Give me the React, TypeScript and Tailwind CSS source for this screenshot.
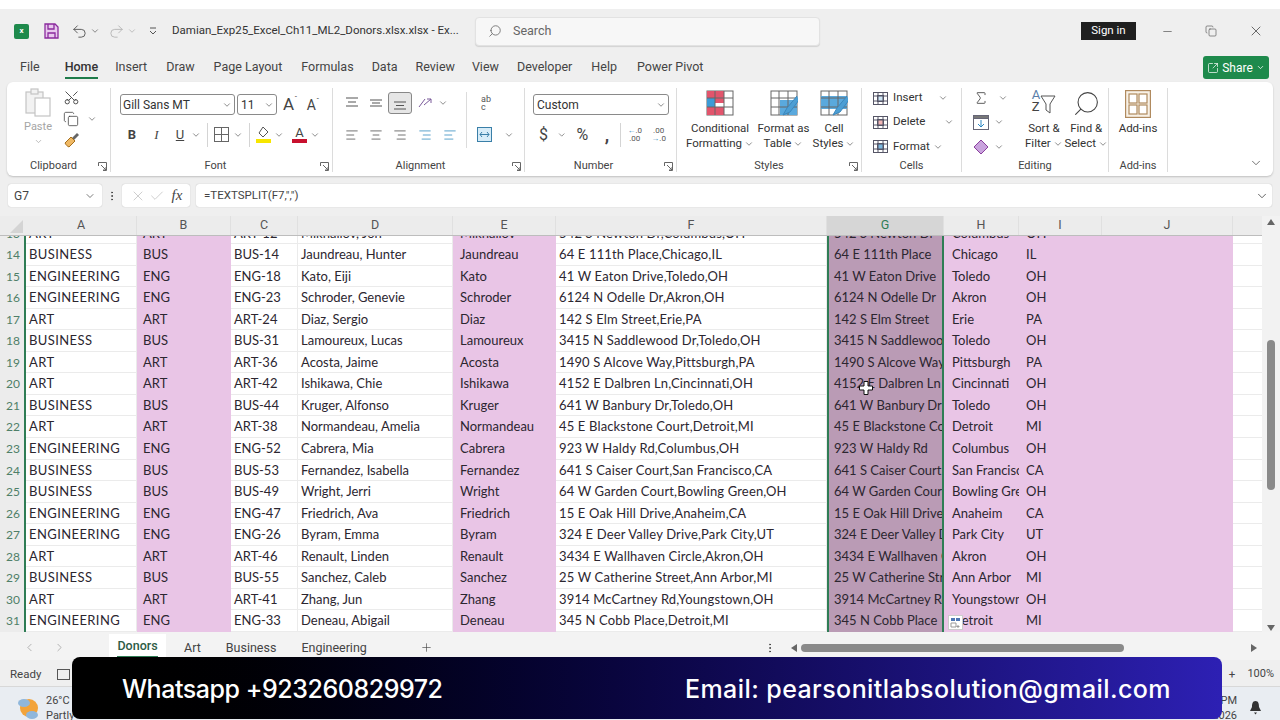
import React from "react";
import { Search, Undo2, Redo2, ChevronDown, ChevronLeft, ChevronRight, Scissors, AlignLeft, AlignCenter, AlignRight, Sigma, X, Check, Minus, Plus, SquareArrowOutUpRight, Copy, EllipsisVertical } from "lucide-react";

const ui = "font-['Roboto',sans-serif]";
const rows: string[][] = [
  ["13","ART","ART","ART-12","Mikhailov, Jon","Mikhailov","542 S Newton Dr,Columbus,OH","542 S Newton Dr","Columbus","OH"],
  ["14","BUSINESS","BUS","BUS-14","Jaundreau, Hunter","Jaundreau","64 E 111th Place,Chicago,IL","64 E 111th Place","Chicago","IL"],
  ["15","ENGINEERING","ENG","ENG-18","Kato, Eiji","Kato","41 W Eaton Drive,Toledo,OH","41 W Eaton Drive","Toledo","OH"],
  ["16","ENGINEERING","ENG","ENG-23","Schroder, Genevie","Schroder","6124 N Odelle Dr,Akron,OH","6124 N Odelle Dr","Akron","OH"],
  ["17","ART","ART","ART-24","Diaz, Sergio","Diaz","142 S Elm Street,Erie,PA","142 S Elm Street","Erie","PA"],
  ["18","BUSINESS","BUS","BUS-31","Lamoureux, Lucas","Lamoureux","3415 N Saddlewood Dr,Toledo,OH","3415 N Saddlewood Dr","Toledo","OH"],
  ["19","ART","ART","ART-36","Acosta, Jaime","Acosta","1490 S Alcove Way,Pittsburgh,PA","1490 S Alcove Way","Pittsburgh","PA"],
  ["20","ART","ART","ART-42","Ishikawa, Chie","Ishikawa","4152 E Dalbren Ln,Cincinnati,OH","4152 E Dalbren Ln","Cincinnati","OH"],
  ["21","BUSINESS","BUS","BUS-44","Kruger, Alfonso","Kruger","641 W Banbury Dr,Toledo,OH","641 W Banbury Dr","Toledo","OH"],
  ["22","ART","ART","ART-38","Normandeau, Amelia","Normandeau","45 E Blackstone Court,Detroit,MI","45 E Blackstone Court","Detroit","MI"],
  ["23","ENGINEERING","ENG","ENG-52","Cabrera, Mia","Cabrera","923 W Haldy Rd,Columbus,OH","923 W Haldy Rd","Columbus","OH"],
  ["24","BUSINESS","BUS","BUS-53","Fernandez,  Isabella","Fernandez","641 S Caiser Court,San Francisco,CA","641 S Caiser Court","San Francisco","CA"],
  ["25","BUSINESS","BUS","BUS-49","Wright,  Jerri","Wright","64 W Garden Court,Bowling Green,OH","64 W Garden Court","Bowling Green","OH"],
  ["26","ENGINEERING","ENG","ENG-47","Friedrich, Ava","Friedrich","15 E Oak Hill Drive,Anaheim,CA","15 E Oak Hill Drive","Anaheim","CA"],
  ["27","ENGINEERING","ENG","ENG-26","Byram,  Emma","Byram","324 E Deer Valley Drive,Park City,UT","324 E Deer Valley Drive","Park City","UT"],
  ["28","ART","ART","ART-46","Renault, Linden","Renault","3434 E Wallhaven Circle,Akron,OH","3434 E Wallhaven Circle","Akron","OH"],
  ["29","BUSINESS","BUS","BUS-55","Sanchez,  Caleb","Sanchez","25 W Catherine Street,Ann Arbor,MI","25 W Catherine Street","Ann Arbor","MI"],
  ["30","ART","ART","ART-41","Zhang, Jun","Zhang","3914 McCartney Rd,Youngstown,OH","3914 McCartney Rd","Youngstown","OH"],
  ["31","ENGINEERING","ENG","ENG-33","Deneau, Abigail","Deneau","345 N Cobb Place,Detroit,MI","345 N Cobb Place","Detroit","MI"],
];

const whiteCell = "border-b border-r border-[#ebebeb] bg-white pl-[3px]";
const pinkCell = "bg-[#e9c5e6]";

function Chev({ className = "" }: { className?: string }) {
  return <ChevronDown size={10} strokeWidth={1.6} className={"text-[#555] " + className} />;
}

function Launcher() {
  return (
    <svg width="9" height="9" viewBox="0 0 9 9" fill="none" stroke="#666" strokeWidth="1">
      <path d="M.5 4V.5H8.5V8.5H5M3 3L8 8M8 5V8H5" />
    </svg>
  );
}

function Group({ w, label, lp = "", launcher, children }: { w: string; label: string; lp?: string; launcher?: boolean; children: React.ReactNode }) {
  return (
    <div className={"flex flex-col h-[84px] border-r border-[#dcdcdc] my-[6px] " + w}>
      <div className="h-[72px] shrink-0">{children}</div>
      <div className={"relative h-[12px] flex items-center justify-center text-[11px] text-[#444] " + lp}>
        <span>{label}</span>
        {launcher && <span className="absolute right-[3px] top-[2px] flex"><Launcher /></span>}
      </div>
    </div>
  );
}

function BigIcon({ children, line1, line2, w }: { children: React.ReactNode; line1: string; line2: string; w: string }) {
  return (
    <div className={"flex flex-col items-center " + w}>
      <div className="h-[29px] flex items-center">{children}</div>
      <div className="text-[11.5px] leading-[15px] text-[#333] mt-[4px] text-center whitespace-nowrap">{line1}</div>
      <div className="text-[11.5px] leading-[15px] text-[#333] flex items-center gap-[2px] whitespace-nowrap">
        {line2}
        <Chev />
      </div>
    </div>
  );
}

function GridIcon({ fill }: { fill: "cond" | "table" | "cell" }) {
  return (
    <svg width="28" height="26" viewBox="0 0 28 26" fill="none">
      <rect x="1" y="1" width="26" height="24" fill="#fff" stroke="#666" />
      {fill === "cond" && (
        <>
          <rect x="1" y="1" width="17" height="7" fill="#e2556c" />
          <rect x="1" y="8" width="8" height="9" fill="#3d9bd6" />
          <rect x="9" y="8" width="9" height="5" fill="#e2556c" />
          <rect x="1" y="17" width="17" height="8" fill="#e2556c" />
        </>
      )}
      {fill === "table" && <rect x="10" y="10" width="17" height="15" fill="#5aa9dd" />}
      {fill === "cell" && <rect x="1" y="6" width="26" height="13" fill="#5aa9dd" />}
      <path d="M1 8H27M1 17H27M9 1V25M18 1V25" stroke="#666" />
      {fill !== "cond" && <path d="M27 6L17 18L13 25L20 22L29 10" fill="#4c9ed4" stroke="#3b87bc" />}
    </svg>
  );
}

function CellsIcon({ color }: { color: string }) {
  return (
    <svg width="15" height="15" viewBox="0 0 15 15" fill="none" stroke="#556">
      <rect x=".5" y="1.5" width="14" height="12" fill="#fff" />
      <rect x="4.5" y="4.5" width="6" height="6" fill={color} />
      <path d="M.5 5H14.5M.5 10H14.5M5 1.5V13.5M10 1.5V13.5" />
    </svg>
  );
}

function VAlign({ pos }: { pos: "top" | "mid" | "bot" }) {
  const d = pos === "top" ? "M1 2H13M3 6H11M1 10H13" : pos === "mid" ? "M1 4H13M3 7H11M1 10H13" : "M1 6H13M3 9.5H11M1 13H13";
  return (
    <svg width="14" height="14" viewBox="0 0 14 14" fill="none" stroke="#555" strokeWidth="1.2">
      <path d={d} />
    </svg>
  );
}

function Ribbon() {
  return (
    <div className="mx-[7px] h-[94px] bg-white rounded-[6px] shadow-[0_1px_2px_rgba(0,0,0,0.2)] flex items-start pr-[10px]">
      <Group w="w-[104px]" label="Clipboard" lp="pr-[10px]" launcher>
        <div className="flex h-full">
          <div className="w-[50px] flex flex-col items-center pl-[12px]">
            <svg width="26" height="29" viewBox="0 0 26 29" fill="none" stroke="#c4c4c4" strokeWidth="1.2">
              <rect x="1" y="4" width="17" height="21" fill="#f2f2f2" />
              <rect x="6" y="1" width="7" height="5" fill="#f2f2f2" />
              <rect x="10" y="10" width="15" height="18" fill="#fff" />
            </svg>
            <span className="text-[11px] text-[#a5a5a5] mt-[3px] leading-[14px]">Paste</span>
            <ChevronDown size={9} className="text-[#aaa] mt-[3px]" />
          </div>
          <div className="flex flex-col pl-[6px] pt-[1px] gap-[5px]">
            <Scissors size={17} strokeWidth={1.3} className="text-[#444] -rotate-90" />
            <div className="flex items-center gap-[8px]">
              <Copy size={16} strokeWidth={1.2} className="text-[#444]" />
              <Chev />
            </div>
            <svg width="17" height="17" viewBox="0 0 17 17" fill="none">
              <path d="M9 6L14 1L16 3L11 8Z" fill="#666" />
              <path d="M2 11L8 5L12 9L6 15C4 14 3 13 2 11Z" fill="#f0b964" stroke="#a56e1c" />
            </svg>
          </div>
        </div>
      </Group>
      <Group w="w-[222px]" label="Font" lp="pr-[12px]" launcher>
        <div className="pl-[9px] pt-[6px]">
          <div className="flex items-center h-[21px]">
            <div className="w-[115px] h-[21px] border border-[#8a8a8a] rounded-[3px] flex items-center justify-between pl-[2px] pr-[2px] text-[12px] text-[#333]">
              <span>Gill Sans MT</span>
              <Chev />
            </div>
            <div className="ml-[2px] w-[40px] h-[21px] border border-[#8a8a8a] rounded-[3px] flex items-center justify-between pl-[3px] pr-[2px] text-[12px] text-[#333]">
              <span>11</span>
              <Chev />
            </div>
            <span className="ml-[6px] text-[17px] text-[#444] leading-none">A<span className="text-[8px] align-top">ˆ</span></span>
            <span className="ml-[9px] text-[14px] text-[#444] leading-none">A<span className="text-[8px] align-top">ˇ</span></span>
          </div>
          <div className="flex items-center h-[21px] mt-[9px] text-[#444]">
            <span className="w-[24px] text-center font-bold text-[13px]">B</span>
            <span className="w-[25px] text-center italic text-[13px] font-['Liberation_Serif',serif]">I</span>
            <span className="w-[22px] text-center underline text-[13px]">U</span>
            <Chev />
            <div className="w-px h-[24px] bg-[#d4d4d4] mx-[6px]" />
            <svg width="15" height="15" viewBox="0 0 15 15" fill="none" stroke="#666"><rect x=".5" y=".5" width="14" height="14" /><path d="M7.5 .5V14.5M.5 7.5H14.5" /></svg>
            <Chev className="ml-[4px]" />
            <div className="w-px h-[24px] bg-[#d4d4d4] mx-[6px]" />
            <svg width="15" height="17" viewBox="0 0 15 17" fill="none"><path d="M7 1L12 6L7 11L3 7Z" stroke="#555" fill="#fff" /><rect y="13" width="15" height="4" fill="#f7e600" /></svg>
            <Chev className="ml-[3px]" />
            <div className="ml-[8px] w-[15px] flex flex-col items-center">
              <span className="text-[13px] leading-[13px]">A</span>
              <div className="w-[15px] h-[4px] bg-[#c8102e]" />
            </div>
            <Chev className="ml-[3px]" />
          </div>
        </div>
      </Group>
      <Group w="w-[192px]" label="Alignment" lp="pr-[16px]" launcher>
        <div className="flex pl-[7px] pt-[4px] h-full">
          <div className="w-[126px]">
            <div className="flex items-center h-[22px] text-[#555]">
              <div className="w-[24px] flex justify-center"><VAlign pos="top" /></div>
              <div className="w-[24px] flex justify-center"><VAlign pos="mid" /></div>
              <div className="w-[24px] h-[22px] flex items-center justify-center bg-[#e6e6e6] border border-[#888] rounded-[3px]"><VAlign pos="bot" /></div>
              <div className="w-[26px] flex justify-center">
                <svg width="15" height="15" viewBox="0 0 15 15" fill="none" stroke="#7a5a9a"><path d="M1 11L7 3M6 9L13 3M13 3V7M13 3H9" /></svg>
              </div>
              <Chev />
            </div>
            <div className="flex items-center h-[21px] mt-[10px] text-[#555]">
              <div className="w-[24px] flex justify-center"><AlignLeft size={14} strokeWidth={1.4} /></div>
              <div className="w-[24px] flex justify-center"><AlignCenter size={14} strokeWidth={1.4} /></div>
              <div className="w-[24px] flex justify-center"><AlignRight size={14} strokeWidth={1.4} /></div>
              <div className="w-[25px] flex justify-center text-[#3a8fc0]"><AlignRight size={14} strokeWidth={1.4} /></div>
              <div className="w-[25px] flex justify-center text-[#3a8fc0]"><AlignLeft size={14} strokeWidth={1.4} /></div>
            </div>
          </div>
          <div className="border-l border-[#dcdcdc] h-[56px] pl-[10px] pt-[0px]">
            <div className="h-[22px] flex items-center pl-[4px] text-[9px] leading-[8px] text-[#555]">ab<br />c</div>
            <div className="h-[21px] mt-[10px] flex items-center gap-[8px]">
              <svg width="15" height="15" viewBox="0 0 15 15" fill="none" stroke="#3a7fa8"><rect x=".5" y=".5" width="14" height="14" fill="#d7ecf8" /><path d="M3 7.5H12M5 5L3 7.5L5 10M10 5L12 7.5L10 10" /></svg>
              <Chev className="ml-[4px]" />
            </div>
          </div>
        </div>
      </Group>
      <Group w="w-[152px]" label="Number" lp="pr-[14px]" launcher>
        <div className="pl-[8px] pr-[7px] pt-[6px]">
          <div className="h-[21px] border border-[#8a8a8a] rounded-[3px] flex items-center justify-between pl-[3px] pr-[2px] text-[12px] text-[#333]">
            <span>Custom</span>
            <Chev />
          </div>
          <div className="flex items-center h-[21px] mt-[9px] text-[#444]">
            <span className="w-[22px] text-center text-[16px]">$</span>
            <Chev className="ml-[3px]" />
            <span className="w-[30px] ml-[2px] text-center text-[16px]">%</span>
            <span className="w-[22px] text-center text-[18px] font-bold leading-[14px]">,</span>
            <div className="w-px h-[24px] bg-[#d4d4d4] mx-[3px]" />
            <span className="w-[22px] text-[8px] leading-[8px] text-[#555] text-center"><span className="text-[#3a8fc0]">←</span>.0<br />.00</span>
            <span className="w-[22px] ml-[3px] text-[8px] leading-[8px] text-[#555] text-center">.00<br /><span className="text-[#3a8fc0]">→</span>.0</span>
          </div>
        </div>
      </Group>
      <Group w="w-[185px]" label="Styles" launcher>
        <div className="flex pl-[7px]">
          <BigIcon w="w-[72px]" line1="Conditional" line2="Formatting"><GridIcon fill="cond" /></BigIcon>
          <BigIcon w="w-[55px]" line1="Format as" line2="Table"><GridIcon fill="table" /></BigIcon>
          <BigIcon w="w-[46px]" line1="Cell" line2="Styles"><GridIcon fill="cell" /></BigIcon>
        </div>
      </Group>
      <Group w="w-[100px]" label="Cells">
        <div className="flex flex-col pl-[11px] -mt-[2px] text-[11.5px] text-[#333]">
          <div className="h-[24px] flex items-center gap-[5px]"><CellsIcon color="#cfe6f5" /><span className="w-[36px]">Insert</span><Chev className="ml-[4px]" /></div>
          <div className="h-[24px] flex items-center gap-[5px]"><CellsIcon color="#f2b6b6" /><span className="w-[38px]">Delete</span><Chev className="ml-[8px]" /></div>
          <div className="h-[25px] flex items-center gap-[5px]"><CellsIcon color="#7db9e0" /><span>Format</span><Chev className="ml-[-2px]" /></div>
        </div>
      </Group>
      <Group w="w-[147px]" label="Editing">
        <div className="flex pl-[11px]">
          <div className="w-[54px] flex flex-col -mt-[2px]">
            <div className="h-[24px] flex items-center gap-[9px]"><Sigma size={16} strokeWidth={1.3} className="text-[#444]" /><Chev /></div>
            <div className="h-[24px] flex items-center gap-[5px]">
              <svg width="16" height="15" viewBox="0 0 16 15" fill="none" stroke="#667"><rect x=".5" y=".5" width="15" height="14" fill="#fff" /><rect x=".5" y=".5" width="15" height="3" fill="#777" /><path d="M8 5V12M5 9L8 12L11 9" stroke="#2c87c2" /></svg>
              <Chev />
            </div>
            <div className="h-[25px] flex items-center gap-[5px]">
              <svg width="16" height="16" viewBox="0 0 16 16" fill="#c9a3dd" stroke="#8a3f9d"><path d="M1 8L8 1L15 8L8 15Z" /></svg>
              <Chev />
            </div>
          </div>
          <div className="w-[44px] flex flex-col items-center pt-[1px]">
            <div className="h-[29px] flex items-start leading-[12px] text-[13px] text-[#5a7ea8]">
              <span>A<br /><span className="text-[#444]">Z</span></span>
              <svg width="16" height="20" viewBox="0 0 16 20" fill="none" stroke="#555" className="mt-[6px]"><path d="M1 1H15L10 9V18L6 15V9Z" /></svg>
            </div>
            <div className="text-[11.5px] leading-[15px] text-[#333] mt-[3px]">Sort &amp;</div>
            <div className="text-[11.5px] leading-[15px] text-[#333] flex items-center gap-[2px]">Filter<Chev /></div>
          </div>
          <div className="w-[44px] flex flex-col items-center pt-[1px]">
            <div className="h-[29px]"><Search size={29} strokeWidth={0.9} className="text-[#444] -scale-x-100" /></div>
            <div className="text-[11.5px] leading-[15px] text-[#333] mt-[3px]">Find &amp;</div>
            <div className="text-[11.5px] leading-[15px] text-[#333] flex items-center gap-[2px]">Select<Chev /></div>
          </div>
        </div>
      </Group>
      <Group w="w-[59px]" label="Add-ins">
        <div className="flex flex-col items-center pt-[2px]">
          <svg width="26" height="28" viewBox="0 0 26 28" fill="#fff" stroke="#b08a5e" strokeWidth="1.2">
            <rect x=".6" y=".6" width="24.8" height="26.8" fill="#f8f1e6" />
            <rect x="4" y="4" width="8" height="9" /><rect x="14" y="4" width="8" height="9" />
            <rect x="4" y="15" width="8" height="9" /><rect x="14" y="15" width="8" height="9" />
          </svg>
          <span className="text-[11.5px] text-[#333] mt-[3px] leading-[15px]">Add-ins</span>
        </div>
      </Group>
      <div className="flex-1 h-full flex items-end justify-end pb-[6px]">
        <ChevronDown size={14} strokeWidth={1.4} className="text-[#555]" />
      </div>
    </div>
  );
}

const cols: [string, string][] = [
  ["A", "w-[111px]"], ["B", "w-[94px]"], ["C", "w-[67px]"], ["D", "w-[155px]"], ["E", "w-[103px]"],
  ["F", "w-[271px]"], ["G", "w-[117px]"], ["H", "w-[75px]"], ["I", "w-[83px]"], ["J", "w-[131px]"],
];

function Sheet() {
  return (
    <div className="flex h-[416px] mt-[9px]">
      <div className="w-[1262px] flex flex-col">
        <div className="flex h-[20px] bg-[#ececec] border-b border-[#bdbdbd] text-[12.5px] text-[#555] relative z-10 shrink-0">
          <div className="w-[26px] flex items-end justify-end pr-[3px] pb-[2px]">
            <div className="w-0 h-0 border-l-[13px] border-l-transparent border-b-[13px] border-b-[#d4d4d4]" />
          </div>
          {cols.map(([c, w]) => (
            <div key={c} className={w + " flex items-center justify-center border-r border-[#e0e0e0] " + (c === "G" ? "bg-[#d6d6d6] text-[#2f7d55]" : "")}>{c}</div>
          ))}
        </div>
        <div className="relative flex-1 overflow-hidden font-['Lato',sans-serif] text-[13px] text-[#2c2630]">
          <div className="-mt-[13.5px]">
            {rows.map((r) => (
              <div key={r[0]} className="flex h-[21.56px] leading-[21px] whitespace-nowrap">
                <div className="w-[26px] bg-[#ececec] border-r-2 border-[#2f7d55] text-[#4f7f68] text-right pr-[4px] text-[12px]">{r[0]}</div>
                <div className={"w-[111px] overflow-hidden tracking-[0.4px] " + whiteCell}>{r[1]}</div>
                <div className={"w-[94px] pl-[6px] " + pinkCell}>{r[2]}</div>
                <div className={"w-[67px] overflow-hidden " + whiteCell}>{r[3]}</div>
                <div className={"w-[155px] overflow-hidden " + whiteCell}>{r[4]}</div>
                <div className={"w-[103px] pl-[7px] " + pinkCell}>{r[5]}</div>
                <div className={"w-[271px] overflow-hidden tracking-[0.15px] " + whiteCell}>{r[6]}</div>
                <div className="w-[117px] pl-[5px] pr-[1px] overflow-hidden bg-[#ba9bb5] border-x-2 border-[#2f7d55]">{r[7]}</div>
                <div className={"w-[75px] pl-[8px] pr-[1px] overflow-hidden " + pinkCell}>{r[8]}</div>
                <div className={"w-[83px] pl-[7px] " + pinkCell}>{r[9]}</div>
                <div className={"w-[131px] " + pinkCell} />
                <div className="w-[29px] bg-white border-b border-[#ebebeb]" />
              </div>
            ))}
          </div>
          <svg className="absolute left-[859px] top-[145px]" width="14" height="14" viewBox="0 0 14 14" fill="#fff" stroke="#111" strokeWidth="1">
            <path d="M5 .5H9V5H13.5V9H9V13.5H5V9H.5V5H5Z" />
          </svg>
          <svg className="absolute left-[948px] top-[379px]" width="15" height="15" viewBox="0 0 15 15">
            <rect x=".5" y=".5" width="14" height="14" fill="#fff" stroke="#ccc" />
            <rect x="3" y="3" width="4" height="3" fill="#4f77b5" />
            <rect x="8" y="3" width="4" height="3" fill="#4f77b5" />
            <path d="M3 8H8V12H3ZM10 10V13M8.5 11.5H11.5" fill="none" stroke="#999" />
          </svg>
        </div>
      </div>
      <div className="w-[18px] bg-[#f2f2f2] flex flex-col items-center relative">
        <div className="w-0 h-0 mt-[3px] border-x-[4px] border-x-transparent border-b-[6px] border-b-[#666]" />
        <div className="w-[8px] h-[150px] mt-[115px] bg-[#8a8a8a] rounded-full" />
        <div className="w-0 h-0 mt-auto mb-[1px] border-x-[4px] border-x-transparent border-t-[6px] border-t-[#666]" />
      </div>
    </div>
  );
}

export default function App() {
  return (
    <div className={"relative w-[1280px] h-[720px] overflow-hidden bg-white " + ui}>
      <div className="h-[9px] bg-white" />
      <div className="h-[711px] bg-[#efefef] flex flex-col">
        {/* Title bar */}
        <div className="h-[41px] pt-[3px] flex items-center shrink-0 text-[#444]">
          <div className="ml-[14px] w-[15px] h-[15px] rounded-[2px] bg-[#1e8a4c] flex items-center justify-center text-white text-[8px] font-bold">x</div>
          <svg className="ml-[15px]" width="15" height="16" viewBox="0 0 15 16" fill="#e8c9ee" stroke="#8a2a9d" strokeWidth="1.3">
            <path d="M1 1H11L14 4V15H1Z" /><path d="M4 1V6H10V1M4 15V10H11V15" fill="none" />
          </svg>
          <Undo2 size={17} strokeWidth={1.3} className="ml-[12px] text-[#555]" />
          <Chev className="ml-[2px]" />
          <Redo2 size={17} strokeWidth={1.3} className="ml-[8px] text-[#b5b5b5]" />
          <ChevronDown size={10} className="ml-[2px] text-[#b5b5b5]" />
          <svg className="ml-[11px]" width="10" height="10" viewBox="0 0 10 10" fill="none" stroke="#555"><path d="M2 2H8M2 5L5 8L8 5" /></svg>
          <span className="ml-[14px] w-[303px] text-[11.5px] text-[#333] whitespace-nowrap">Damian_Exp25_Excel_Ch11_ML2_Donors.xlsx.xlsx  -  Ex...</span>
          <div className="w-[345px] h-[29px] bg-[#f7f7f7] border border-[#e2e2e2] rounded-[4px] shadow-[0_1px_1px_rgba(0,0,0,0.12)] flex items-center pl-[12px] text-[12.5px] text-[#666]">
            <Search size={14} strokeWidth={1.4} className="-scale-x-100" />
            <span className="ml-[11px]">Search</span>
          </div>
          <div className="ml-[261px] w-[55px] h-[18px] bg-[#1f1f1f] text-white text-[11.5px] flex items-center justify-center">Sign in</div>
          <Minus size={13} strokeWidth={1.3} className="ml-[25px] text-[#555]" />
          <Copy size={12} strokeWidth={1.3} className="ml-[31px] text-[#555]" />
          <X size={16} strokeWidth={1.3} className="ml-[31px] text-[#555]" />
        </div>
        {/* Tabs */}
        <div className="h-[32px] pt-[3px] flex items-center relative shrink-0 text-[12.5px] text-[#444]">
          <span className="ml-[20px]">File</span>
          <span className="ml-[25px] relative font-medium text-[#333]">Home<span className="absolute left-0 right-0 -bottom-[2px] h-[2px] bg-[#1e7b4a]" /></span>
          <span className="ml-[17px]">Insert</span>
          <span className="ml-[19px]">Draw</span>
          <span className="ml-[19px]">Page Layout</span>
          <span className="ml-[19px]">Formulas</span>
          <span className="ml-[18px]">Data</span>
          <span className="ml-[18px]">Review</span>
          <span className="ml-[17px]">View</span>
          <span className="ml-[18px]">Developer</span>
          <span className="ml-[19px]">Help</span>
          <span className="ml-[20px]">Power Pivot</span>
          <div className="ml-auto mr-[11px] w-[66px] h-[23px] bg-[#1e8a4c] rounded-[3px] text-white flex items-center justify-center gap-[3px] text-[12px]">
            <SquareArrowOutUpRight size={12} strokeWidth={1.4} />
            <span>Share</span>
            <ChevronDown size={9} />
          </div>
        </div>
        <Ribbon />
        {/* Formula bar */}
        <div className="mt-[8px] h-[23px] flex items-stretch shrink-0 pl-[8px] pr-[8px] text-[#444]">
          <div className="w-[94px] bg-white rounded-[3px] shadow-[0_0_1px_rgba(0,0,0,0.3)] flex items-center justify-between px-[6px] text-[12px]">
            <span>G7</span>
            <ChevronDown size={12} strokeWidth={1.4} />
          </div>
          <div className="w-[20px] flex items-center justify-center"><EllipsisVertical size={12} /></div>
          <div className="w-[68px] bg-white rounded-[3px] shadow-[0_0_1px_rgba(0,0,0,0.3)] flex items-center justify-center gap-[3px]">
            <X size={16} strokeWidth={1} className="text-[#b5b5b5]" />
            <Check size={16} strokeWidth={1} className="text-[#b5b5b5]" />
            <span className="ml-[4px] italic text-[15px] font-['Liberation_Serif',serif]">fx</span>
          </div>
          <div className="ml-[6px] flex-1 bg-white rounded-[3px] shadow-[0_0_1px_rgba(0,0,0,0.3)] flex items-center justify-between pl-[8px] pr-[3px] text-[11.5px]">
            <span>=TEXTSPLIT(F7,",")</span>
            <ChevronDown size={14} strokeWidth={1.4} />
          </div>
        </div>
        <Sheet />
        {/* Sheet tabs */}
        <div className="h-[28px] pt-[4px] flex items-center bg-[#f3f3f3] shrink-0 text-[12.5px] text-[#444]">
          <ChevronLeft size={13} strokeWidth={1.3} className="ml-[23px] text-[#999]" />
          <ChevronRight size={13} strokeWidth={1.3} className="ml-[17px] text-[#999]" />
          <div className="ml-[43px] w-[57px] h-[24px] -mt-[4px] bg-white flex items-center justify-center font-medium text-[#2e5c46]">
            <span className="relative">Donors<span className="absolute left-0 right-0 -bottom-[3px] h-[2px] bg-[#2f7d55]" /></span>
          </div>
          <span className="ml-[18px]">Art</span>
          <span className="ml-[25px]">Business</span>
          <span className="ml-[25px]">Engineering</span>
          <Plus size={13} strokeWidth={1.2} className="ml-[53px]" />
          <EllipsisVertical size={12} className="ml-[331px]" />
          <div className="ml-[15px] w-0 h-0 border-y-[4px] border-y-transparent border-r-[6px] border-r-[#666]" />
          <div className="ml-[4px] w-[323px] h-[8px] bg-[#8a8a8a] rounded-full" />
          <div className="ml-[127px] w-0 h-0 border-y-[4px] border-y-transparent border-l-[6px] border-l-[#666]" />
        </div>
        {/* Status bar */}
        <div className="h-[26px] pt-[3px] flex items-center shrink-0 bg-[#efefef] text-[11.5px] text-[#444]">
          <span className="ml-[10px]">Ready</span>
          <div className="ml-[16px] w-[13px] h-[11px] border border-[#555]" />
          <span className="ml-auto">+</span>
          <span className="ml-[12px] mr-[6px] text-[11px]">100%</span>
        </div>
        {/* Taskbar */}
        <div className="flex-1 pt-[6px] flex items-center bg-[#e9edf2] border-t border-[#d8d8d8] text-[11px] text-[#444]">
          <svg className="ml-[17px]" width="23" height="22" viewBox="0 0 23 22">
            <circle cx="12" cy="11" r="9" fill="#f2a33a" />
            <ellipse cx="7" cy="6" rx="6" ry="4" fill="#8fb7dc" />
            <ellipse cx="15" cy="18" rx="6" ry="4" fill="#8fb7dc" />
          </svg>
          <div className="ml-[6px] leading-[15px]">
            <div>26°C</div>
            <div>Partly</div>
          </div>
          <div className="ml-auto leading-[15px] text-right">
            <div>PM</div>
            <div>2026</div>
          </div>
          <svg className="ml-[12px] mr-[18px]" width="13" height="15" viewBox="0 0 13 15" fill="#333">
            <path d="M6.5 1C3.5 1 3 4 3 7L1 11H12L10 7C10 4 9.5 1 6.5 1ZM5 12.5H8L6.5 14.5Z" />
          </svg>
        </div>
      </div>
      {/* Banner overlay */}
      <div className="absolute left-[72px] top-[657px] w-[1150px] h-[62px] pt-[3px] rounded-[8px] bg-gradient-to-r from-black to-[#2d20b4] flex items-center justify-between pl-[50px] pr-[51px] text-white text-[25px] font-medium font-['Inter',sans-serif]">
        <span className="tracking-[-0.45px]">Whatsapp +923260829972</span>
        <span className="tracking-[0.43px]">Email: pearsonitlabsolution@gmail.com</span>
      </div>
    </div>
  );
}
